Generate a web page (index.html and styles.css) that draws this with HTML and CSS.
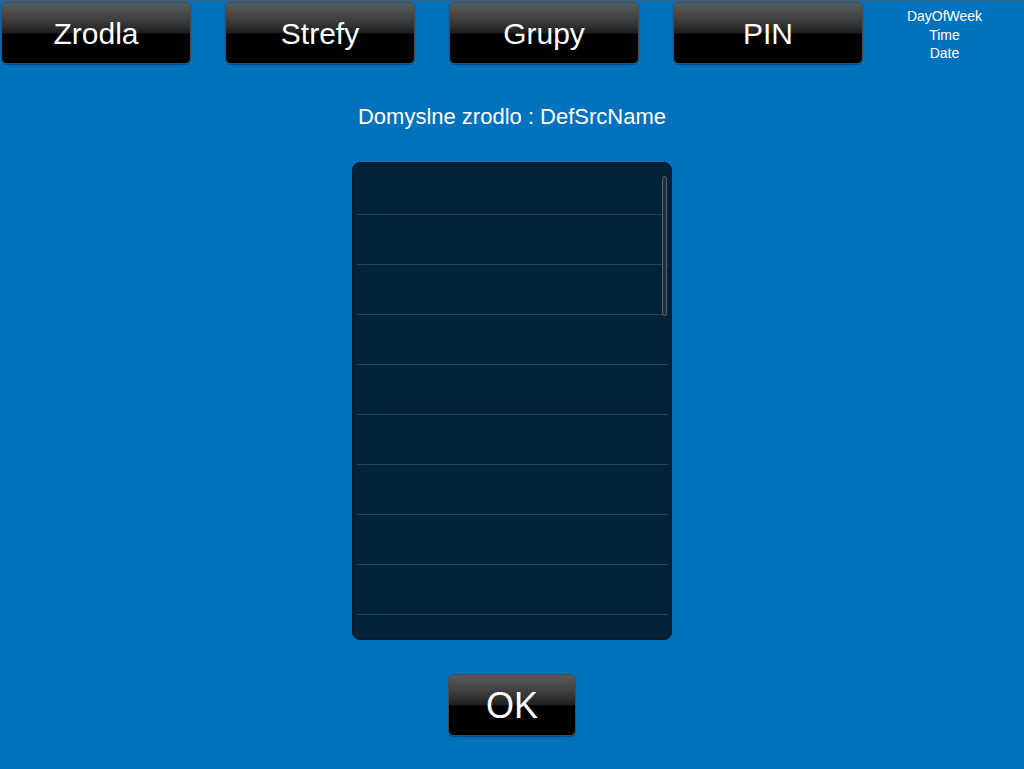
FILE: index.html
```html
<!DOCTYPE html>
<html>
<head>
<meta charset="utf-8">
<link rel="stylesheet" href="styles.css">
</head>
<body>
<div class="screen">
  <header class="topbar">
    <button class="btn nav">Zrodla</button>
    <button class="btn nav">Strefy</button>
    <button class="btn nav">Grupy</button>
    <button class="btn nav">PIN</button>
    <div class="clock">
      <div>DayOfWeek</div>
      <div>Time</div>
      <div>Date</div>
    </div>
  </header>
  <main class="content">
    <div class="title">Domyslne zrodlo : DefSrcName</div>
    <div class="list">
      <div class="rows">
        <div class="row"></div>
        <div class="row"></div>
        <div class="row"></div>
        <div class="row"></div>
        <div class="row"></div>
        <div class="row"></div>
        <div class="row"></div>
        <div class="row"></div>
        <div class="row"></div>
        <div class="row"></div>
      </div>
      <div class="scrollbar"></div>
    </div>
    <button class="btn ok">OK</button>
  </main>
</div>
</body>
</html>
```

FILE: styles.css
```css
html, body {
  margin: 0;
  padding: 0;
}
body {
  background: #0071bd;
  font-family: "Liberation Sans", Arial, sans-serif;
  color: #fff;
}
.screen {
  width: 1024px;
  height: 769px;
  overflow: hidden;
  border-top: 1px solid #3d5d73;
  box-sizing: border-box;
}
.topbar {
  display: flex;
  align-items: flex-start;
  padding: 1px 0 0 1px;
  gap: 34px;
}
.btn {
  box-sizing: border-box;
  border: 1px solid #4a4a4a;
  border-radius: 6px;
  background: linear-gradient(to bottom, #5c5c5c 0%, #3c3c3c 30%, #202020 49%, #000 52%, #000 100%);
  color: #fff;
  font-family: "Liberation Sans", Arial, sans-serif;
  padding: 2px 0 0 0;
  cursor: pointer;
  box-shadow: 0 1px 1px rgba(0,0,0,0.35);
}
.nav {
  width: 190px;
  height: 62px;
  font-size: 30px;
}
.clock {
  flex: 1;
  margin-left: -34px;
  text-align: center;
  font-size: 14px;
  line-height: 18.5px;
  padding-top: 5px;
  padding-left: 2px;
}
.content {
  display: flex;
  flex-direction: column;
  align-items: center;
}
.title {
  margin-top: 40px;
  font-size: 22px;
  line-height: 26px;
}
.list {
  position: relative;
  margin-top: 32px;
  width: 320px;
  height: 478px;
  box-sizing: border-box;
  background: #022238;
  border: 1px solid #0b1823;
  border-radius: 8px;
  padding: 2px 3px 0 4px;
  overflow: hidden;
}
.rows {
  display: flex;
  flex-direction: column;
}
.row {
  height: 50px;
  box-sizing: border-box;
  border-bottom: 1px solid #2a4356;
  flex: none;
}
.scrollbar {
  position: absolute;
  left: 309px;
  top: 13px;
  width: 5px;
  height: 140px;
  box-sizing: border-box;
  border: 1px solid #596670;
  border-radius: 3px;
  background: #1c2f3c;
}
.ok {
  margin-top: 34px;
  width: 128px;
  height: 62px;
  font-size: 36px;
}
```
